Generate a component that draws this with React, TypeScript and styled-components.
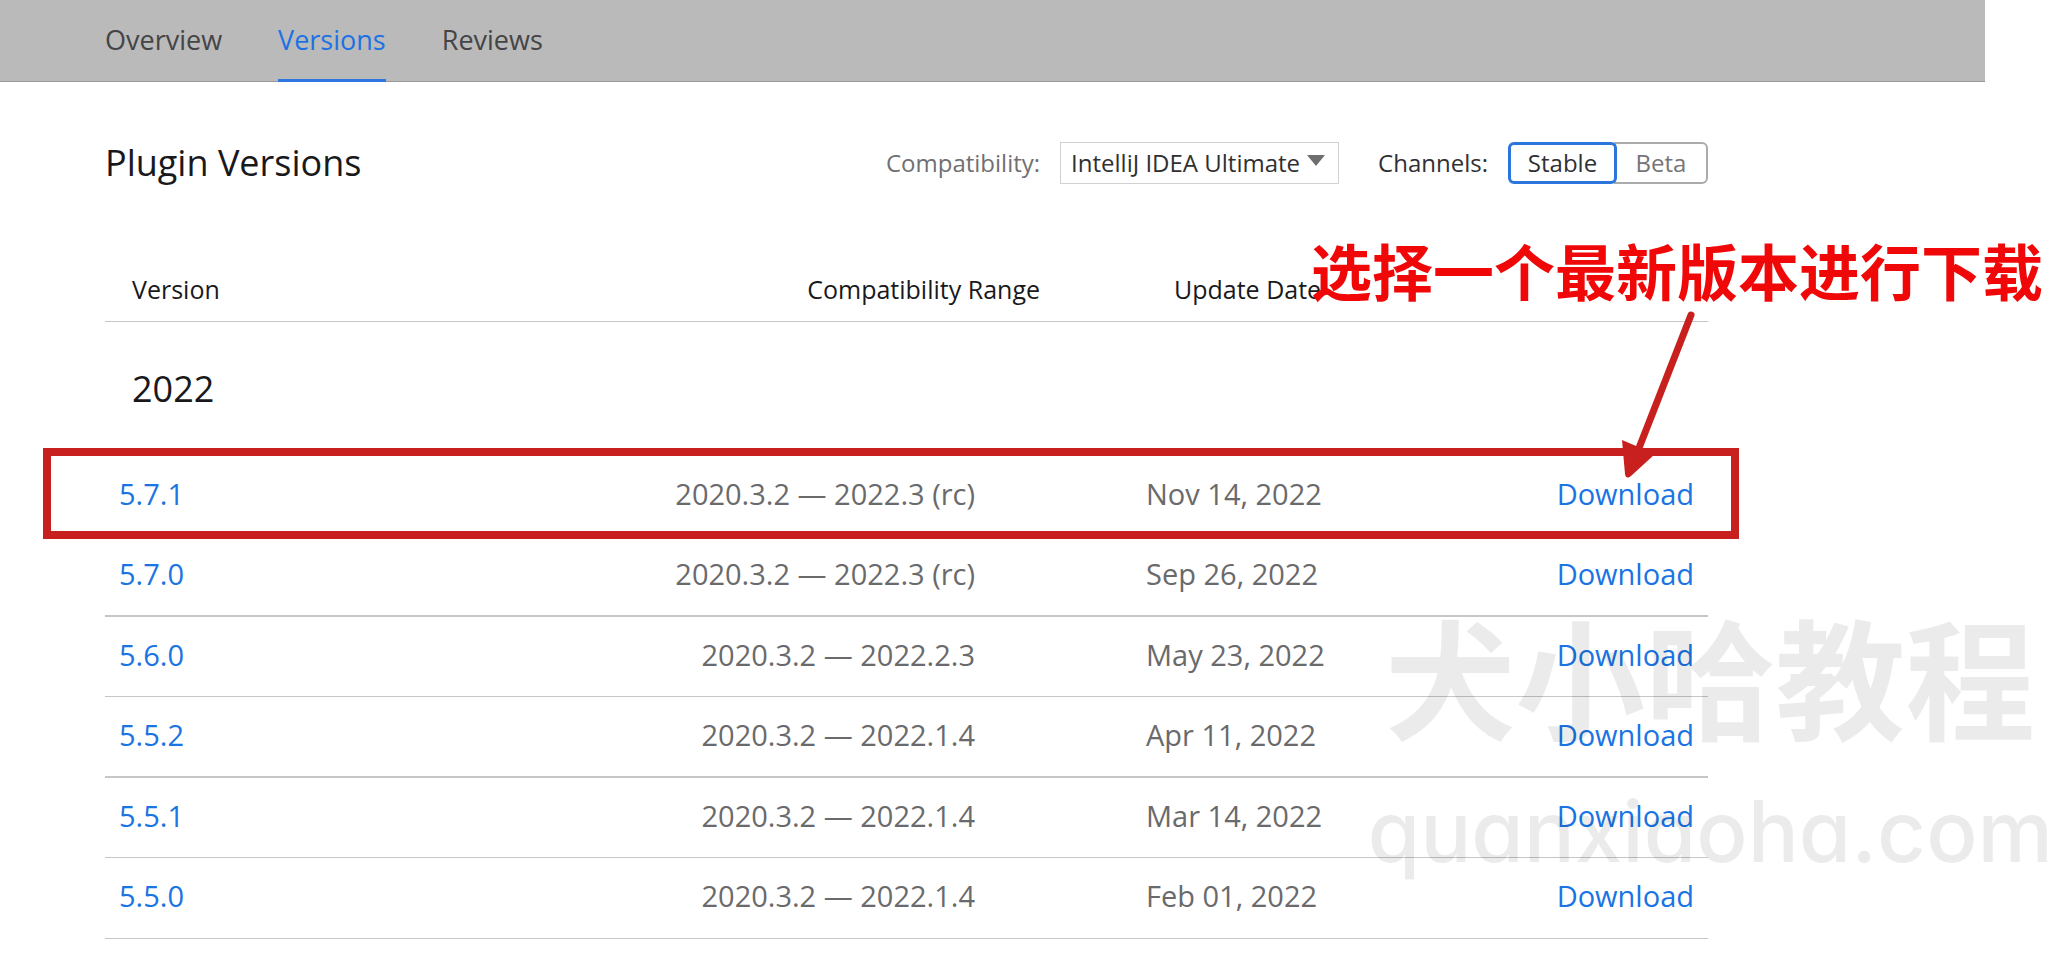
import React from "react";
import styled, { createGlobalStyle } from "styled-components";

const GlobalStyle = createGlobalStyle`
  * { box-sizing: border-box; }
  body {
    margin: 0;
    background: #fff;
    color: #19191c;
    font-family: "Open Sans", "Noto Sans CJK SC", sans-serif;
    font-weight: 400;
    overflow-x: hidden;
  }
`;

const Page = styled.div`
  position: relative;
  overflow: hidden;
`;

const TabBar = styled.nav`
  display: flex;
  gap: 56px;
  height: 82px;
  margin-right: 78px;
  padding-left: 105px;
  background: #bababa;
  border-bottom: 1px solid #989898;
`;

const Tab = styled.a<{ $active?: boolean }>`
  height: 82px;
  line-height: 80px;
  font-size: 27px;
  text-decoration: none;
  color: ${(p) => (p.$active ? "#1c72e4" : "#454547")};
  border-bottom: 3px solid ${(p) => (p.$active ? "#3076e2" : "transparent")};
`;

const Content = styled.main`
  padding: 60px 355px 18px 105px;
`;

const Toolbar = styled.header`
  display: flex;
  align-items: center;
  height: 42px;
`;

const Title = styled.h1`
  margin: 0 auto 0 0;
  font-size: 36px;
  line-height: 42px;
  font-weight: inherit;
  white-space: nowrap;
`;

const Label = styled.label`
  margin-right: 20px;
  font-size: 24px;
  line-height: 40px;
  color: #707072;
`;

const SelectBox = styled.div`
  position: relative;
  margin-right: 39px;
`;

const Select = styled.select`
  display: block;
  appearance: none;
  width: 279px;
  height: 42px;
  padding: 0 10px 2px;
  border: 1px solid #d1d1d2;
  border-radius: 0;
  background: #fff;
  color: #303033;
  font: inherit;
  font-size: 24px;
`;

const Caret = styled.svg`
  position: absolute;
  top: 13px;
  right: 14px;
  pointer-events: none;
`;

const Channels = styled.fieldset`
  display: flex;
  align-items: center;
  margin: 0;
  padding: 0;
  border: 0;
`;

const ChannelsLabel = styled.span`
  margin-right: 20px;
  font-size: 24px;
  line-height: 40px;
  color: #303033;
`;

const ChannelButton = styled.button<{ $active?: boolean }>`
  width: ${(p) => (p.$active ? 109 : 94)}px;
  height: 42px;
  margin-left: ${(p) => (p.$active ? 0 : -3)}px;
  padding: 0 0 2px;
  position: relative;
  z-index: ${(p) => (p.$active ? 1 : 0)};
  border: ${(p) => (p.$active ? "3px solid #2a76dd" : "2px solid #ababac")};
  border-radius: ${(p) => (p.$active ? "6px" : "0 6px 6px 0")};
  background: #fff;
  color: ${(p) => (p.$active ? "#303033" : "#757577")};
  font: inherit;
  font-size: 24px;
`;

const TableArea = styled.section`
  position: relative;
  margin-top: 72px;
`;

const Table = styled.table`
  width: 100%;
  table-layout: fixed;
  border-collapse: separate;
  border-spacing: 0;
`;

const Col = styled.col<{ $width?: number }>`
  width: ${(p) => (p.$width ? `${p.$width}px` : "auto")};
`;

const HeadCell = styled.th<{ $align?: string; $indent?: number }>`
  height: 66px;
  padding: 0 0 0 ${(p) => p.$indent ?? 0}px;
  border-bottom: 1px solid #c6c6c8;
  font-size: 25px;
  line-height: 36px;
  font-weight: inherit;
  text-align: ${(p) => p.$align ?? "left"};
`;

const YearCell = styled.th`
  height: 134px;
  padding: 0 0 0 27px;
  font-size: 36px;
  line-height: 48px;
  font-weight: inherit;
  text-align: left;
`;

const Cell = styled.td`
  height: 80px;
  padding: 0 14px 4px;
  border-bottom: 1px solid #c6c6c8;
  font-size: 29px;
  line-height: 36px;
  color: #6a6a6c;
`;

const RangeCell = styled(Cell)`
  padding-right: 65px;
  text-align: right;
`;

const DateCell = styled(Cell)`
  padding-left: 106px;
`;

const ActionCell = styled(Cell)`
  text-align: right;
`;

const Row = styled.tr`
  &:nth-child(even) > td {
    height: 81px;
    border-bottom-width: 2px;
  }
  &:last-child > td {
    border-bottom-width: 1px;
  }
`;

const Link = styled.a`
  color: #1a74e2;
  text-decoration: none;
`;

const Highlight = styled.div`
  position: absolute;
  top: 192px;
  left: -62px;
  right: -31px;
  height: 91px;
  border: 8px solid #c8201e;
  pointer-events: none;
`;

const Arrow = styled.svg`
  position: absolute;
  top: 44px;
  right: 0;
  pointer-events: none;
`;

const Note = styled.p`
  position: absolute;
  top: -22px;
  right: -335px;
  margin: 0;
  font: 700 61px/72px "Noto Sans CJK SC", sans-serif;
  color: #f00808;
  white-space: nowrap;
`;

const Watermark = styled.div`
  position: absolute;
  top: 593px;
  right: 10px;
  display: flex;
  flex-direction: column;
  align-items: center;
  color: rgba(0, 0, 0, 0.08);
  white-space: nowrap;
  pointer-events: none;
`;

const WatermarkName = styled.span`
  font: 700 130px/160px "Noto Sans CJK SC", sans-serif;
`;

const WatermarkSite = styled.span`
  font: 500 85px/158px Inter, sans-serif;
  font-feature-settings: "cv11";
`;

const versions = [
  { version: "5.7.1", range: "2020.3.2 — 2022.3 (rc)", date: "Nov 14, 2022" },
  { version: "5.7.0", range: "2020.3.2 — 2022.3 (rc)", date: "Sep 26, 2022" },
  { version: "5.6.0", range: "2020.3.2 — 2022.2.3", date: "May 23, 2022" },
  { version: "5.5.2", range: "2020.3.2 — 2022.1.4", date: "Apr 11, 2022" },
  { version: "5.5.1", range: "2020.3.2 — 2022.1.4", date: "Mar 14, 2022" },
  { version: "5.5.0", range: "2020.3.2 — 2022.1.4", date: "Feb 01, 2022" },
];

export default function App() {
  return (
    <Page>
      <GlobalStyle />
      <TabBar>
        <Tab href="#overview">Overview</Tab>
        <Tab href="#versions" $active aria-current="page">Versions</Tab>
        <Tab href="#reviews">Reviews</Tab>
      </TabBar>
      <Content>
        <Toolbar>
          <Title>Plugin Versions</Title>
          <Label htmlFor="product">Compatibility:</Label>
          <SelectBox>
            <Select id="product" defaultValue="iu">
              <option value="iu">IntelliJ IDEA Ultimate</option>
            </Select>
            <Caret width="18" height="12" viewBox="0 0 18 12" aria-hidden="true">
              <path d="M0 0H18L9 11Z" fill="#6e6e70" />
            </Caret>
          </SelectBox>
          <Channels aria-labelledby="channels">
            <ChannelsLabel id="channels">Channels:</ChannelsLabel>
            <ChannelButton type="button" $active aria-pressed="true">Stable</ChannelButton>
            <ChannelButton type="button" aria-pressed="false">Beta</ChannelButton>
          </Channels>
        </Toolbar>
        <TableArea>
          <Table>
            <colgroup>
              <Col $width={300} />
              <Col />
              <Col $width={400} />
              <Col $width={268} />
            </colgroup>
            <thead>
              <tr>
                <HeadCell scope="col" $indent={27}>Version</HeadCell>
                <HeadCell scope="col" $align="right">Compatibility Range</HeadCell>
                <HeadCell scope="col" $indent={134}>Update Date</HeadCell>
                <HeadCell as="td" />
              </tr>
              <tr>
                <YearCell colSpan={4} scope="colgroup">2022</YearCell>
              </tr>
            </thead>
            <tbody>
              {versions.map((v) => (
                <Row key={v.version}>
                  <Cell><Link href={`#${v.version}`}>{v.version}</Link></Cell>
                  <RangeCell>{v.range}</RangeCell>
                  <DateCell>{v.date}</DateCell>
                  <ActionCell><Link href={`#download-${v.version}`}>Download</Link></ActionCell>
                </Row>
              ))}
            </tbody>
          </Table>
          <Highlight />
          <Arrow width="100" height="190" viewBox="0 0 100 190" aria-hidden="true">
            <path d="M83 15L31 148" stroke="#c8201e" strokeWidth="7" strokeLinecap="round" />
            <path d="M14 140L47 154L23 176Q18 180 17 174Z" fill="#c8201e" />
          </Arrow>
          <Note>选择一个最新版本进行下载</Note>
        </TableArea>
      </Content>
      <Watermark aria-hidden="true">
        <WatermarkName>犬小哈教程</WatermarkName>
        <WatermarkSite>quanxiaoha.com</WatermarkSite>
      </Watermark>
    </Page>
  );
}
